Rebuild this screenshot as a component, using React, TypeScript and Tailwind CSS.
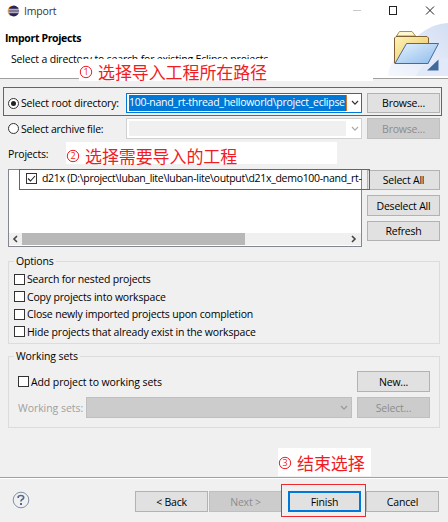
import React from "react";

const chevron = (color: string) => (
  <svg width="8" height="6" viewBox="0 0 8 6" fill="none" className="shrink-0">
    <path d="M1 1 L4 4.2 L7 1" stroke={color} strokeWidth="1.2" />
  </svg>
);

const tones = {
  normal: "border border-[#b2b2b2] bg-[#e1e1e1] text-black",
  disabled: "border border-[#bfbfbf] bg-[#cccccc] text-[#8c8c8c]",
  focus: "border-2 border-[#0078d7] bg-[#e1e1e1] text-black",
};

function Button({ children, className = "h-[21px]", tone = "normal" }: { children: React.ReactNode; className?: string; tone?: keyof typeof tones }) {
  return (
    <button className={`flex w-[73px] shrink-0 items-center justify-center tracking-[-0.2px] whitespace-nowrap ${tones[tone]} ${className}`}>
      {children}
    </button>
  );
}

function Radio({ on = false }: { on?: boolean }) {
  return (
    <span className="flex size-[11px] shrink-0 items-center justify-center rounded-full border border-[#333] bg-white">
      {on && <span className="size-[5px] rounded-full bg-[#222]" />}
    </span>
  );
}

function Check({ on = false }: { on?: boolean }) {
  return (
    <span className="flex size-[11px] shrink-0 items-center justify-center border border-[#333] bg-white">
      {on && (
        <svg width="9" height="9" viewBox="0 0 9 9" fill="none">
          <path d="M1 4.5 L3.5 7 L8 2" stroke="#222" strokeWidth="1.1" />
        </svg>
      )}
    </span>
  );
}

function Note({ n, children, className }: { n: string; children: string; className: string }) {
  return (
    <div className={`absolute flex items-center bg-white whitespace-nowrap text-[#f01c24] ${className}`}>
      <svg width="14" height="14" viewBox="0 0 14 14" className="shrink-0" fill="none">
        <circle cx="7" cy="7" r="5.7" stroke="#f01c24" strokeWidth="1" />
        <text x="7" y="10.2" textAnchor="middle" fontSize="9" fill="#f01c24">{n}</text>
      </svg>
      <span className="ml-[5px] font-['Noto_Sans_CJK_SC',sans-serif] text-[17px] leading-[22px] tracking-[-0.1px]">{children}</span>
    </div>
  );
}

const options = [
  "Search for nested projects",
  "Copy projects into workspace",
  "Close newly imported projects upon completion",
  "Hide projects that already exist in the workspace",
];

export default function App() {
  return (
    <div className="relative h-[522px] w-[448px] overflow-hidden bg-[#f0f0f0] font-['Open_Sans','Noto_Sans',sans-serif] text-[10.5px] leading-[14px] tracking-[-0.18px] text-black">
      <header className="relative h-[79px] border-b border-[#a0a0a0] bg-white">
        <div className="flex h-[22px] items-center pl-[7px]">
          <svg width="13" height="12" viewBox="0 0 13 12">
            <path d="M4 .8 Q.7 2.5.7 6 T4 11.2" fill="#f7941e" />
            <circle cx="6.8" cy="6" r="5.4" fill="#2c2255" />
            <path d="M1.3 4.3h11M1 6h11.6M1.3 7.7h11" stroke="#fff" strokeWidth=".8" />
          </svg>
          <span className="ml-1 text-[#333]">Import</span>
          <svg className="ml-auto mr-[13px]" width="84" height="12" viewBox="0 0 84 12" fill="none">
            <path d="M2 5.5h8" stroke="#c8c8c8" />
            <rect x="38.5" y="1.5" width="7" height="8" stroke="#222" />
            <path d="M75 1.5l8 8M83 1.5l-8 8" stroke="#222" />
          </svg>
        </div>
        <h1 className="mt-[9px] pl-[5px] text-[10.5px] leading-[14px] font-bold tracking-[-0.36px]">Import Projects</h1>
        <p className="mt-[7px] pl-[11px] whitespace-nowrap">Select a directory to search for existing Eclipse projects.</p>
        <svg className="absolute right-0 bottom-[2px]" width="62" height="54" viewBox="0 0 62 54">
          <defs>
            <linearGradient id="swirl" x1="0" y1="1" x2="1" y2="0">
              <stop offset="0" stopColor="#f5f8fd" />
              <stop offset="1" stopColor="#d3def3" />
            </linearGradient>
            <linearGradient id="blue" x1="0" y1="0" x2="1" y2="1">
              <stop offset="0" stopColor="#e6f2ff" />
              <stop offset="1" stopColor="#8dbbea" />
            </linearGradient>
            <linearGradient id="gold" x1="0" y1="0" x2="1" y2="1">
              <stop offset="0" stopColor="#fff3b8" />
              <stop offset="1" stopColor="#e6c45c" />
            </linearGradient>
          </defs>
          <path d="M2 54 Q4 34 22 26 Q36 3 62 1 V54Z" fill="url(#swirl)" />
          <path d="M30 54 Q37 38 62 36 V54Z" fill="#e2eafa" />
          <path d="M10.5 14 L13.5 9.5 H26 L29.5 14Z" fill="#fff8cf" stroke="#a59252" />
          <path d="M8.5 41 V16 L10 14.5 H41 L42.5 16 V41Z" fill="url(#gold)" stroke="#806034" />
          <path d="M9 41.5 L20.5 21.5 H52.5 L42 41.5Z" fill="url(#blue)" stroke="#446b9e" />
          <path d="M41 48.5 L52.5 37.5 V48.5Z" fill="#416a9c" />
        </svg>
      </header>

      <main className="h-[398px] px-2">
        <div className="flex h-[34px] items-end">
          <div className="flex h-[20px] w-[118px] items-center gap-[2px] whitespace-nowrap"><Radio on />Select root directory:</div>
          <div className="flex h-[20px] w-[236px] items-center border border-[#0078d7] bg-white pl-[2px]">
            <span className="h-[16px] w-[218px] border-r border-[#d27a2c] bg-[#0078d7] leading-[14px] tracking-[-0.27px] whitespace-nowrap text-white">100-nand_rt-thread_helloworld\project_eclipse</span>
            <span className="ml-[4px]">{chevron("#333")}</span>
          </div>
          <Button className="ml-[5px] h-[20px]">Browse...</Button>
        </div>
        <div className="mt-[5px] flex h-[21px]">
          <div className="flex w-[118px] items-center gap-[2px] tracking-[-0.25px] whitespace-nowrap"><Radio />Select archive file:</div>
          <div className="flex w-[236px] items-center border border-[#d0d0d0] bg-white pl-[2px]">
            <span className="h-[15px] w-[217px] bg-[#f0f0f0]" />
            <span className="ml-[5px]">{chevron("#aaa")}</span>
          </div>
          <Button tone="disabled" className="ml-[5px] h-[21px]">Browse...</Button>
        </div>
        <div className="mt-2 h-[22px] leading-[14px]">Projects:</div>
        <div className="flex gap-[5px]">
          <div className="flex h-[78px] w-[354px] flex-col border border-[#828790] bg-white">
            <div className="mt-px ml-[17px] flex h-[14px] items-center gap-[5px] whitespace-nowrap">
              <Check on />
              <span className="tracking-[-0.3px]">d21x (D:\project\luban_lite\luban-lite\output\d21x_demo100-nand_rt-</span>
            </div>
            <div className="mt-auto mb-px flex h-[12px] items-center bg-[#f0f0f0]">
              <svg width="13" height="12" viewBox="0 0 13 12" fill="none"><path d="M8 3L5 6l3 3" stroke="#444" strokeWidth="1.6" /></svg>
              <span className="h-[12px] w-[223px] bg-[#b8b8b8]" />
              <svg className="ml-auto" width="14" height="12" viewBox="0 0 14 12" fill="none"><path d="M5 3l3 3-3 3" stroke="#444" strokeWidth="1.6" /></svg>
            </div>
          </div>
          <div className="flex flex-col gap-[5px] pt-px">
            <Button className="h-[20px]">Select All</Button>
            <Button>Deselect All</Button>
            <Button className="h-[20px]">Refresh</Button>
          </div>
        </div>
        <fieldset className="mt-[7px] h-[90px] w-[432px] border border-[#dcdcdc] pl-[5px]">
          <legend className="ml-0 px-[2px] leading-[14px]">Options</legend>
          <div className="-mt-px flex flex-col gap-[3.5px] pt-[5px]">
            {options.map((label) => (
              <label key={label} className="flex h-[14px] items-center gap-[2px] whitespace-nowrap"><Check /><span>{label}</span></label>
            ))}
          </div>
        </fieldset>
        <fieldset className="mt-[5px] h-[79px] w-[432px] border border-[#dcdcdc] pl-[9px]">
          <legend className="-ml-[4px] px-[2px] leading-[14px] tracking-[-0.1px]">Working sets</legend>
          <div className="mt-[8px] flex h-[21px] items-center justify-between pr-[9px]">
            <label className="flex items-center gap-[2px] tracking-[-0.1px]"><Check />Add project to working sets</label>
            <Button>New...</Button>
          </div>
          <div className="mt-[5px] flex h-[21px] items-center">
            <span className="w-[68px] tracking-[-0.05px] whitespace-nowrap text-[#a0a0a0]">Working sets:</span>
            <div className="flex h-[21px] w-[266px] items-center justify-end border border-[#bfbfbf] bg-[#cccccc] pr-[3px]">{chevron("#999")}</div>
            <Button tone="disabled" className="ml-[5px] h-[21px]">Select...</Button>
          </div>
        </fieldset>
      </main>

      <footer className="flex h-[45px] border-t border-[#a0a0a0] pt-[13px] pl-[12px] shadow-[inset_0_1px_0_#fff]">
        <svg width="18" height="18" viewBox="0 0 18 18" fill="none">
          <circle cx="9" cy="9" r="7.8" stroke="#8090a8" />
          <path d="M6.2 7V5.8Q6.5 4.5 9 4.5T11.7 6.5Q11.7 8 9.8 8.8Q9 9.2 9 10.5" stroke="#536987" strokeWidth="1.7" />
          <path d="M8 12h2v2H8z" fill="#536987" />
        </svg>
        <div className="ml-[105px] flex">
          <Button>&lt; Back</Button>
          <Button tone="disabled" className="ml-[1px] h-[21px]">Next &gt;</Button>
          <Button tone="focus" className="ml-[6px] h-[21px]">Finish</Button>
          <Button className="ml-[5px] h-[21px]">Cancel</Button>
        </div>
      </footer>

      <Note n="1" className="top-[59px] left-[79px] h-[22px] w-[294px] pt-[4px]">选择导入工程所在路径</Note>
      <Note n="2" className="top-[142px] left-[66px] h-[22px] w-[271px] pt-[6px]">选择需要导入的工程</Note>
      <Note n="3" className="top-[448px] left-[278px] h-[28px] w-[93px] pt-[2px]">结束选择</Note>
      <div className="absolute top-[87px] left-[3px] h-[29px] w-[439px] border border-[#f0282f]" />
      <div className="absolute top-[169px] left-[19px] h-[21px] w-[351px] border border-[#f0282f]" />
      <div className="absolute top-[484px] left-[281px] h-[33px] w-[85px] border border-[#f0282f]" />
    </div>
  );
}
